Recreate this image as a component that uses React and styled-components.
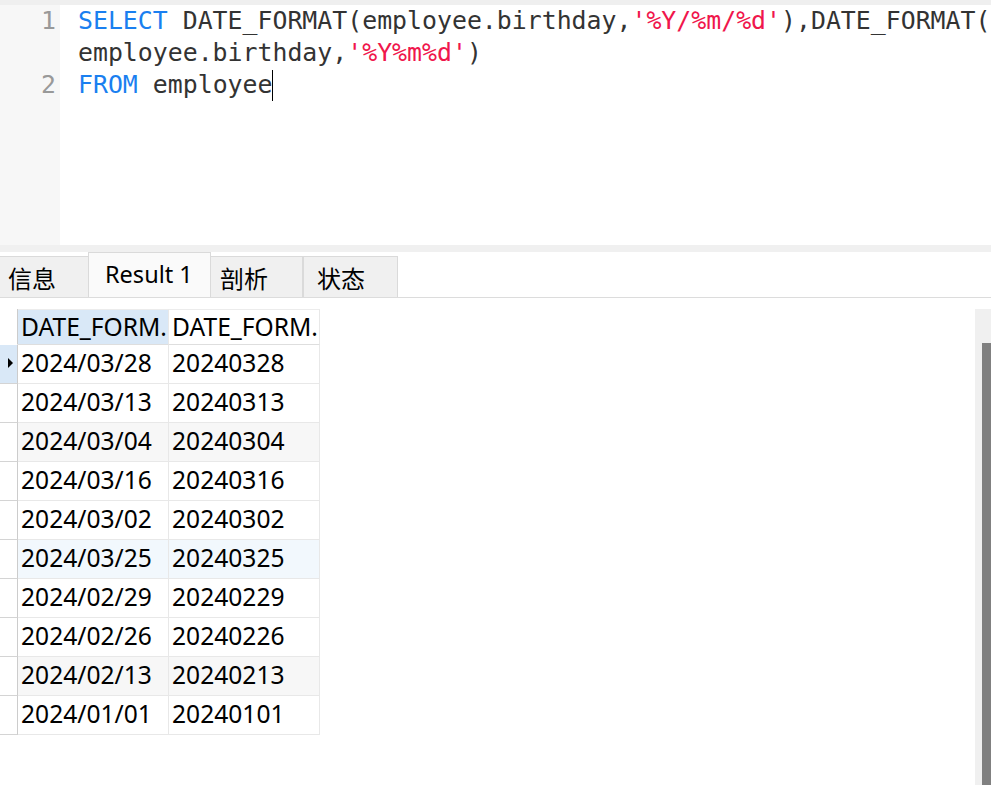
import React from "react";
import styled, { createGlobalStyle } from "styled-components";

const GlobalStyle = createGlobalStyle`
  html, body {
    margin: 0;
    padding: 0;
    background: #ffffff;
    overflow: hidden;
  }
`;

const Page = styled.div`
  width: 991px;
  height: 785px;
  display: flex;
  flex-direction: column;
  background: #ffffff;
`;

const TopStrip = styled.div`
  height: 5px;
  background: #efefef;
`;

const Editor = styled.div`
  height: 240px;
  display: flex;
  font-family: "DejaVu Sans Mono", "Liberation Mono", monospace;
  font-size: 24.85px;
  line-height: 32px;
`;

const Gutter = styled.div`
  width: 60px;
  flex-shrink: 0;
  background: #f7f7f7;
  color: #999999;
  text-align: right;
  box-sizing: border-box;
  padding-right: 4px;
`;

const GutterRow = styled.div`
  height: 32px;
`;

const Code = styled.div`
  flex: 1;
  padding-left: 18px;
  color: #333333;
  white-space: pre;
  overflow: hidden;
`;

const CodeRow = styled.div`
  height: 32px;
`;

const Token = styled.span`
  color: ${({ $kind }) =>
    $kind === "kw" ? "#1a7ff0" : $kind === "str" ? "#f0164c" : "#333333"};
`;

const Caret = styled.span`
  display: inline-block;
  width: 0;
  height: 31px;
  border-left: 1.5px solid #000;
  vertical-align: top;
  margin-top: 1px;
`;

const Band = styled.div`
  height: 7px;
  background: #f0f0f0;
`;

const TabBar = styled.div`
  height: 45px;
  display: flex;
  align-items: flex-end;
  border-bottom: 1px solid #dcdcdc;
  font-family: "Noto Sans", "Noto Sans CJK SC", sans-serif;
  color: #000;
`;

const Tab = styled.div`
  box-sizing: border-box;
  width: ${({ $w }) => $w}px;
  height: ${({ $active }) => ($active ? 45 : 41)}px;
  display: flex;
  align-items: center;
  padding-left: ${({ $pl }) => $pl}px;
  padding-bottom: ${({ $active }) => ($active ? 3 : 0)}px;
  font-size: ${({ $active }) => ($active ? 23.5 : 24)}px;
  background: ${({ $active }) => ($active ? "#fafafa" : "#f0f0f0")};
  border: 1px solid #dadada;
  border-bottom: none;
  border-left-width: ${({ $first }) => ($first ? 0 : 1)}px;
  margin-left: ${({ $active, $after }) => ($active || $after ? -1 : 0)}px;
  position: relative;
  z-index: ${({ $active }) => ($active ? 1 : 0)};
`;

const ResultArea = styled.div`
  flex: 1;
  display: flex;
  justify-content: space-between;
  margin-top: 11px;
`;

const Grid = styled.div`
  display: grid;
  grid-template-columns: 18px 151px 151px;
  grid-auto-rows: 39px;
  grid-template-rows: 36px;
  align-self: flex-start;
  font-family: "Noto Sans", "Liberation Sans", sans-serif;
  font-size: 24.6px;
  color: #000;
`;

const Cell = styled.div`
  box-sizing: border-box;
  display: flex;
  align-items: center;
  padding-left: 3px;
  padding-bottom: 3px;
  white-space: nowrap;
  overflow: hidden;
  border-right: 1px solid #e8e8e8;
  border-bottom: 1px solid #e8e8e8;
  background: ${({ $bg }) => $bg || "#ffffff"};
`;

const HeadCell = styled(Cell)`
  padding-bottom: 2px;
  background: ${({ $sel }) => ($sel ? "#d9e8f7" : "#ffffff")};
  border-top: 1px solid #ececec;
  border-bottom-color: #dedede;
`;

const Indicator = styled.div`
  box-sizing: border-box;
  display: flex;
  align-items: center;
  justify-content: center;
  border-right: 1px solid #cccccc;
  border-bottom: 1px solid ${({ $head }) => ($head ? "transparent" : "#d4d4d4")};
  background: ${({ $active }) => ($active ? "#d9e8f7" : "#ffffff")};
`;

const Arrow = styled.span`
  width: 0;
  height: 0;
  border-top: 5px solid transparent;
  border-bottom: 5px solid transparent;
  border-left: 5px solid #000;
  margin-left: 4px;
  margin-bottom: 2px;
`;

const Scrollbar = styled.div`
  width: 16px;
  background: #f0f0f0;
  display: flex;
  justify-content: flex-end;
  padding-top: 34px;
  box-sizing: border-box;
`;

const Thumb = styled.div`
  width: 9px;
  background: #808080;
`;

const rows = [
  ["2024/03/28", "20240328"],
  ["2024/03/13", "20240313"],
  ["2024/03/04", "20240304"],
  ["2024/03/16", "20240316"],
  ["2024/03/02", "20240302"],
  ["2024/03/25", "20240325"],
  ["2024/02/29", "20240229"],
  ["2024/02/26", "20240226"],
  ["2024/02/13", "20240213"],
  ["2024/01/01", "20240101"],
];

const rowBg = (i) => {
  if (i === 5) return "#f2f8fd";
  if (i === 2 || i === 8) return "#f7f7f7";
  return "#ffffff";
};

const tabs = [
  { label: "信息", w: 89, pl: 8, first: true },
  { label: "Result 1", w: 123, pl: 16, active: true },
  { label: "剖析", w: 93, pl: 9, after: true },
  { label: "状态", w: 95, pl: 13 },
];

export default function App() {
  return (
    <Page>
      <GlobalStyle />
      <TopStrip />
      <Editor>
        <Gutter>
          <GutterRow>1</GutterRow>
          <GutterRow />
          <GutterRow>2</GutterRow>
        </Gutter>
        <Code>
          <CodeRow>
            <Token $kind="kw">SELECT</Token> DATE_FORMAT(employee.birthday,
            <Token $kind="str">'%Y/%m/%d'</Token>),DATE_FORMAT(
          </CodeRow>
          <CodeRow>
            employee.birthday,<Token $kind="str">'%Y%m%d'</Token>)
          </CodeRow>
          <CodeRow>
            <Token $kind="kw">FROM</Token> employee
            <Caret />
          </CodeRow>
        </Code>
      </Editor>
      <Band />
      <TabBar>
        {tabs.map((t) => (
          <Tab
            key={t.label}
            $w={t.w}
            $pl={t.pl}
            $active={t.active}
            $first={t.first}
            $after={t.after}
          >
            {t.label}
          </Tab>
        ))}
      </TabBar>
      <ResultArea>
        <Grid>
          <Indicator $head />
          <HeadCell $sel>DATE_FORM.</HeadCell>
          <HeadCell>DATE_FORM.</HeadCell>
          {rows.map((r, i) => (
            <React.Fragment key={i}>
              <Indicator $active={i === 0}>{i === 0 && <Arrow />}</Indicator>
              <Cell $bg={rowBg(i)}>{r[0]}</Cell>
              <Cell $bg={rowBg(i)}>{r[1]}</Cell>
            </React.Fragment>
          ))}
        </Grid>
        <Scrollbar>
          <Thumb />
        </Scrollbar>
      </ResultArea>
    </Page>
  );
}
